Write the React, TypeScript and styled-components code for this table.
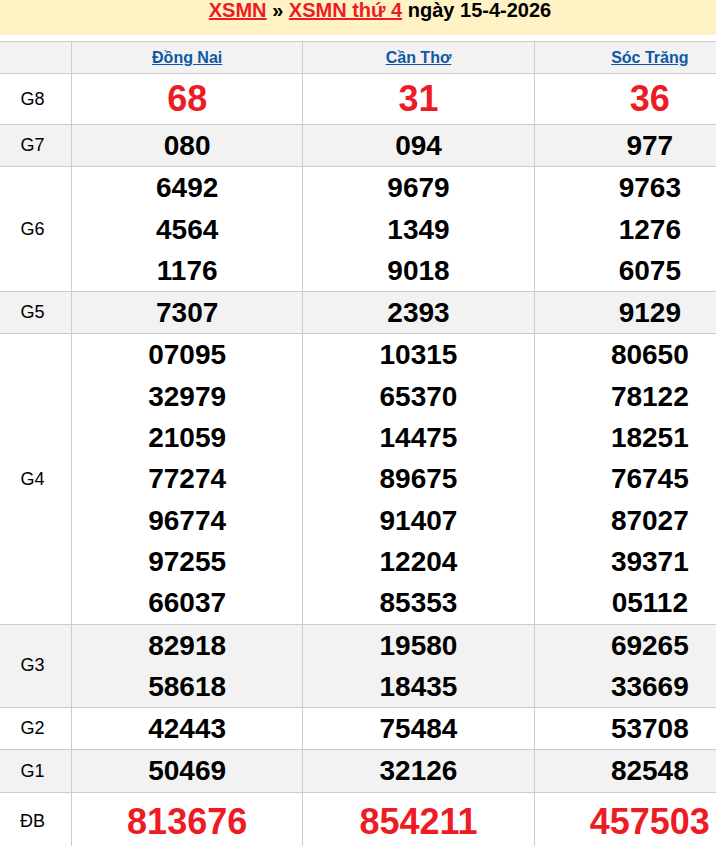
import React from 'react';
import styled, { createGlobalStyle } from 'styled-components';

const GlobalStyle = createGlobalStyle`
  body {
    margin: 0;
    overflow: hidden;
    background: #fff;
    font-family: "Liberation Sans", Arial, sans-serif;
  }
`;

const Page = styled.div`
  width: 772px;
  margin-left: -6px;
`;

const TitleBar = styled.div`
  background: #fff2c4;
  height: 35px;
  margin-bottom: 6px;
  text-align: center;
  font-size: 20px;
  font-weight: 700;
  line-height: 20px;
  color: #000;
`;

const TitleLink = styled.a`
  color: #ed1c24;
  text-decoration: underline;
`;

const Table = styled.table`
  width: 100%;
  border-collapse: collapse;
  table-layout: fixed;
`;

const Row = styled.tr<{ $shade?: boolean }>`
  background: ${(p) => (p.$shade ? '#f2f2f2' : '#fff')};
`;

const HeadCell = styled.th`
  height: 31px;
  padding: 0;
  border: 1px solid #cccccc;
  border-left: none;
  font-size: 16px;
  font-weight: 700;
  text-align: center;
  vertical-align: middle;
  &:first-child {
    width: 77px;
  }
`;

const ProvinceLink = styled.a`
  color: #0f58a8;
  text-decoration: underline;
`;

const Label = styled.td`
  padding: 0;
  border: 1px solid #cccccc;
  border-left: none;
  font-size: 18px;
  text-align: center;
  vertical-align: middle;
  color: #000;
`;

const Cell = styled.td`
  padding: 0;
  border: 1px solid #cccccc;
  text-align: center;
  vertical-align: middle;
`;

const Num = styled.div<{ $big?: boolean; $line: number }>`
  font-size: ${(p) => (p.$big ? '36px' : '28px')};
  line-height: ${(p) => p.$line}px;
  font-weight: 700;
  color: ${(p) => (p.$big ? '#ed1c24' : '#000')};
`;

const provinces = ['Đồng Nai', 'Cần Thơ', 'Sóc Trăng'];

const prizes: { name: string; big?: boolean; line: number; values: string[][] }[] = [
  { name: 'G8', big: true, line: 50, values: [['68'], ['31'], ['36']] },
  { name: 'G7', line: 41.3, values: [['080'], ['094'], ['977']] },
  {
    name: 'G6',
    line: 41.3,
    values: [
      ['6492', '4564', '1176'],
      ['9679', '1349', '9018'],
      ['9763', '1276', '6075'],
    ],
  },
  { name: 'G5', line: 41.3, values: [['7307'], ['2393'], ['9129']] },
  {
    name: 'G4',
    line: 41.3,
    values: [
      ['07095', '32979', '21059', '77274', '96774', '97255', '66037'],
      ['10315', '65370', '14475', '89675', '91407', '12204', '85353'],
      ['80650', '78122', '18251', '76745', '87027', '39371', '05112'],
    ],
  },
  {
    name: 'G3',
    line: 41.3,
    values: [
      ['82918', '58618'],
      ['19580', '18435'],
      ['69265', '33669'],
    ],
  },
  { name: 'G2', line: 41.3, values: [['42443'], ['75484'], ['53708']] },
  { name: 'G1', line: 41.3, values: [['50469'], ['32126'], ['82548']] },
  { name: 'ĐB', big: true, line: 58, values: [['813676'], ['854211'], ['457503']] },
];

const App = () => (
  <Page>
    <GlobalStyle />
    <TitleBar>
      <TitleLink href="#">XSMN</TitleLink> » <TitleLink href="#">XSMN thứ 4</TitleLink> ngày
      15-4-2026
    </TitleBar>
    <Table>
      <thead>
        <Row $shade>
          <HeadCell />
          {provinces.map((p) => (
            <HeadCell key={p}>
              <ProvinceLink href="#">{p}</ProvinceLink>
            </HeadCell>
          ))}
        </Row>
      </thead>
      <tbody>
        {prizes.map((prize, i) => (
          <Row key={prize.name} $shade={i % 2 === 1}>
            <Label>{prize.name}</Label>
            {prize.values.map((col, j) => (
              <Cell key={j}>
                {col.map((v) => (
                  <Num key={v} $big={prize.big} $line={prize.line}>
                    {v}
                  </Num>
                ))}
              </Cell>
            ))}
          </Row>
        ))}
      </tbody>
    </Table>
  </Page>
);

export default App;
